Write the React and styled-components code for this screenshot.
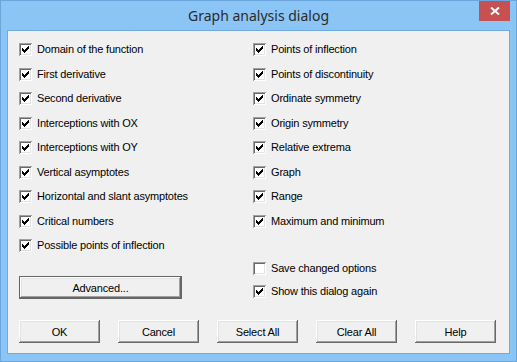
import React from 'react'
import styled, { createGlobalStyle } from 'styled-components'

const GlobalStyle = createGlobalStyle`
  html, body {
    margin: 0;
    padding: 0;
    background: #8ac5f6;
  }
  * {
    box-sizing: border-box;
  }
`

const leftOptions = [
  { label: 'Domain of the function', checked: true },
  { label: 'First derivative', checked: true },
  { label: 'Second derivative', checked: true },
  { label: 'Interceptions with OX', checked: true },
  { label: 'Interceptions with OY', checked: true },
  { label: 'Vertical asymptotes', checked: true },
  { label: 'Horizontal and slant asymptotes', checked: true },
  { label: 'Critical numbers', checked: true },
  { label: 'Possible points of inflection', checked: true },
]

const rightOptions = [
  { label: 'Points of inflection', checked: true },
  { label: 'Points of discontinuity', checked: true },
  { label: 'Ordinate symmetry', checked: true },
  { label: 'Origin symmetry', checked: true },
  { label: 'Relative extrema', checked: true },
  { label: 'Graph', checked: true },
  { label: 'Range', checked: true },
  { label: 'Maximum and minimum', checked: true },
]

const footerButtons = ['OK', 'Cancel', 'Select All', 'Clear All', 'Help']

function CheckBox({ label, checked }) {
  return (
    <Row>
      <Box>
        {checked && (
          <svg width="13" height="13" viewBox="0 0 13 13" shapeRendering="crispEdges">
            <polygon points="3,5 5,7 10,2 10,5 5,10 3,8" fill="#000" />
          </svg>
        )}
      </Box>
      <Label>{label}</Label>
    </Row>
  )
}

export default function App() {
  return (
    <>
      <GlobalStyle />
      <Window>
        <TitleBar>
          <span />
          <Title>Graph analysis dialog</Title>
          <CloseButton>
            <svg width="10" height="8" viewBox="0 0 10 8">
              <path d="M1 0.5 L9 7.5 M9 0.5 L1 7.5" stroke="#fff" strokeWidth="2" />
            </svg>
          </CloseButton>
        </TitleBar>
        <Client>
          <Columns>
            <Column>
              {leftOptions.map((o) => (
                <CheckBox key={o.label} {...o} />
              ))}
              <Button $isDefault $wide>Advanced...</Button>
            </Column>
            <Column>
              {rightOptions.map((o) => (
                <CheckBox key={o.label} {...o} />
              ))}
              <Extra>
                <CheckBox label="Save changed options" checked={false} />
                <CheckBox label="Show this dialog again" checked />
              </Extra>
            </Column>
          </Columns>
          <ButtonRow>
            {footerButtons.map((b) => (
              <Button key={b}>{b}</Button>
            ))}
          </ButtonRow>
        </Client>
      </Window>
    </>
  )
}

const Window = styled.div`
  width: 517px;
  height: 362px;
  background: #8ac5f6;
  border: 1px solid #6aa6dc;
  display: flex;
  flex-direction: column;
  padding: 0 6px 7px 6px;
`

const TitleBar = styled.div`
  height: 29px;
  display: grid;
  grid-template-columns: 1fr auto 1fr;
  align-items: start;
`

const Title = styled.div`
  font-family: 'Noto Sans', 'Open Sans', sans-serif;
  font-size: 14px;
  line-height: 30px;
  color: #2b2b2b;
`

const CloseButton = styled.div`
  justify-self: end;
  width: 31px;
  height: 20px;
  background: #c75050;
  display: flex;
  align-items: center;
  justify-content: center;
`

const Client = styled.div`
  flex: 1;
  background: #f0f0f0;
  border: 1px solid #6fa9dd;
  display: flex;
  flex-direction: column;
  padding: 12px 11px 10px 11px;
`

const Columns = styled.div`
  display: grid;
  grid-template-columns: 234px 1fr;
`

const Column = styled.div`
  display: flex;
  flex-direction: column;
  align-items: flex-start;
`

const Row = styled.div`
  display: flex;
  align-items: center;
  height: 13px;
  margin-bottom: 11.5px;
`

const Box = styled.div`
  width: 13px;
  height: 13px;
  flex: none;
  background: #fff;
  box-shadow: inset 1px 1px #a0a0a0, inset -1px -1px #fff, inset 2px 2px #696969,
    inset -2px -2px #e3e3e3;
  svg {
    display: block;
  }
`

const Label = styled.span`
  font-family: 'Liberation Sans', Arial, sans-serif;
  font-size: 11px;
  letter-spacing: -0.18px;
  line-height: 13px;
  color: #000;
  margin-left: 5px;
  white-space: nowrap;
`

const Extra = styled.div`
  margin-top: 23px;
  display: flex;
  flex-direction: column;
  & > div {
    margin-bottom: 10px;
  }
`

const ButtonRow = styled.div`
  margin-top: auto;
  display: flex;
  gap: 18px;
`

const Button = styled.div`
  width: ${(p) => (p.$wide ? '163px' : '81px')};
  height: 23px;
  margin-top: ${(p) => (p.$wide ? '12.5px' : '0')};
  display: flex;
  align-items: center;
  justify-content: center;
  background: #f0f0f0;
  font-family: 'Liberation Sans', Arial, sans-serif;
  font-size: 11px;
  letter-spacing: -0.18px;
  color: #000;
  box-shadow: ${(p) =>
    p.$isDefault
      ? 'inset 0 0 0 1px #646464, inset -2px -2px #696969, inset 2px 2px #fff, inset -3px -3px #a0a0a0, inset 3px 3px #e3e3e3'
      : 'inset -1px -1px #696969, inset 1px 1px #fff, inset -2px -2px #a0a0a0, inset 2px 2px #e3e3e3'};
`
